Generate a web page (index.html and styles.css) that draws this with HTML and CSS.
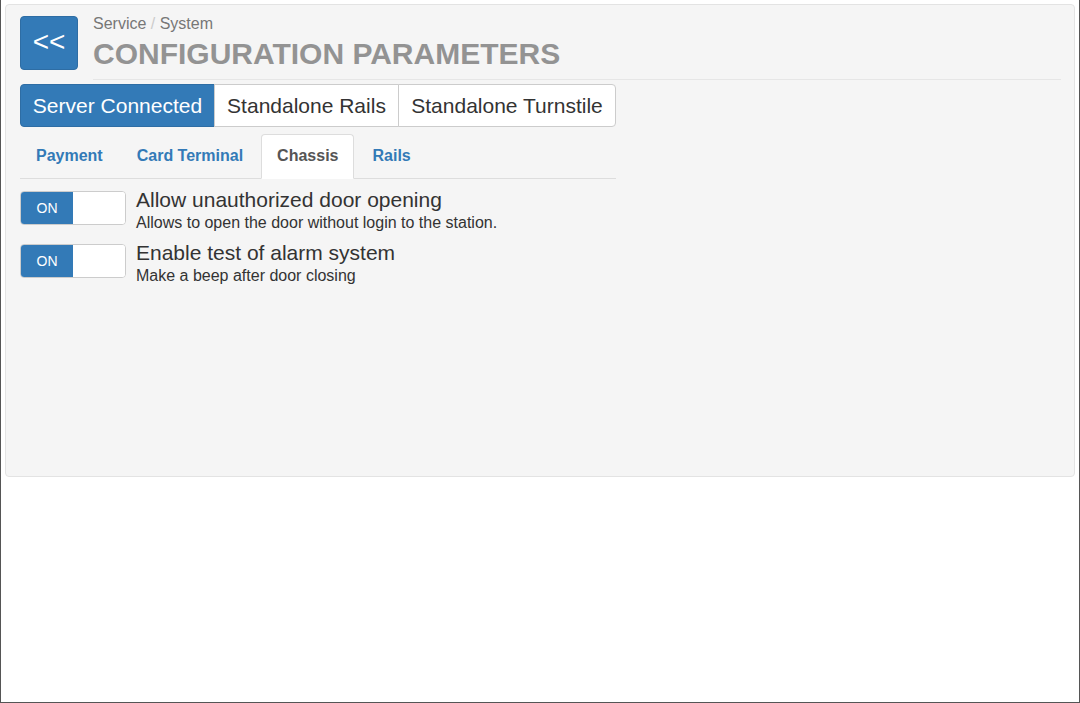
FILE: index.html
```html
<!DOCTYPE html>
<html>
<head>
<meta charset="utf-8">
<link rel="stylesheet" href="styles.css">
</head>
<body>
<div class="frame">
  <div class="well">
    <div class="header">
      <button class="back">&lt;&lt;</button>
      <div class="heading">
        <div class="crumbs">Service <span class="sep">/</span> System</div>
        <h1 class="title">CONFIGURATION PARAMETERS</h1>
      </div>
    </div>
    <div class="content">
      <div class="btn-group">
        <div class="btn active">Server Connected</div>
        <div class="btn">Standalone Rails</div>
        <div class="btn">Standalone Turnstile</div>
      </div>
      <ul class="tabs">
        <li class="tab">Payment</li>
        <li class="tab">Card Terminal</li>
        <li class="tab active">Chassis</li>
        <li class="tab">Rails</li>
      </ul>
      <div class="options">
        <div class="option">
          <div class="switch"><span class="on">ON</span><span class="off"></span></div>
          <div class="text">
            <div class="label">Allow unauthorized door opening</div>
            <div class="desc">Allows to open the door without login to the station.</div>
          </div>
        </div>
        <div class="option">
          <div class="switch"><span class="on">ON</span><span class="off"></span></div>
          <div class="text">
            <div class="label">Enable test of alarm system</div>
            <div class="desc">Make a beep after door closing</div>
          </div>
        </div>
      </div>
    </div>
  </div>
</div>
</body>
</html>
```
FILE: styles.css
```css
html, body {
  margin: 0;
  padding: 0;
  background: #fff;
}
body {
  font-family: "Liberation Sans", Arial, sans-serif;
  color: #333;
}
.frame {
  box-sizing: border-box;
  width: 1080px;
  height: 703px;
  border-left: 1px solid #555;
  border-right: 1px solid #555;
  border-bottom: 1px solid #555;
  padding: 4px 4px 0 4px;
}
.well {
  box-sizing: border-box;
  height: 473px;
  background: #f5f5f5;
  border: 1px solid #e3e3e3;
  border-radius: 4px;
  padding: 11px 13px 0 14px;
}
.header {
  display: flex;
  align-items: flex-start;
}
.back {
  width: 58px;
  height: 54px;
  background: #337ab7;
  border: 1px solid #2e6da4;
  border-radius: 4px;
  color: #fff;
  font-family: "Liberation Sans", Arial, sans-serif;
  font-size: 28px;
  line-height: 1;
  padding: 0 0 3px 0;
  margin: 0 15px 0 0;
}
.heading {
  flex: 1;
  border-bottom: 1px solid #e6e6e6;
  height: 63px;
}
.crumbs {
  font-size: 16px;
  line-height: 20px;
  color: #777;
  margin-top: -2px;
}
.sep {
  color: #ccc;
}
.title {
  margin: 3px 0 0 0;
  font-size: 30px;
  line-height: 34px;
  font-weight: bold;
  color: #939393;
}
.content {
  width: 596px;
}
.btn-group {
  display: flex;
  margin-top: 4px;
}
.btn {
  box-sizing: border-box;
  height: 43px;
  padding: 0 8px;
  font-size: 21px;
  line-height: 41px;
  background: #fff;
  border: 1px solid #ccc;
  color: #333;
  margin-left: -1px;
  white-space: nowrap;
}
.btn:first-child {
  margin-left: 0;
  border-radius: 4px 0 0 4px;
}
.btn:last-child {
  border-radius: 0 4px 4px 0;
  flex: 1;
  text-align: center;
}
.btn.active {
  background: #337ab7;
  border-color: #2e6da4;
  color: #fff;
  width: 195px;
  text-align: center;
}
.btn:nth-child(2) {
  width: 185px;
  text-align: center;
}
.tabs {
  list-style: none;
  margin: 7px 0 0 0;
  padding: 0;
  display: flex;
  border-bottom: 1px solid #ddd;
}
.tab {
  box-sizing: border-box;
  height: 44px;
  padding: 0 15px;
  margin: 0 2px -1px 0;
  font-size: 16px;
  font-weight: bold;
  line-height: 42px;
  color: #337ab7;
  border: 1px solid transparent;
  border-radius: 4px 4px 0 0;
}
.tab.active {
  background: #fff;
  color: #555;
  border-color: #ddd;
  border-bottom-color: #fff;
  height: 45px;
}
.options {
  margin-top: 12px;
  display: flex;
  flex-direction: column;
  gap: 12px;
}
.option {
  display: flex;
  align-items: flex-start;
}
.switch {
  box-sizing: border-box;
  width: 106px;
  height: 34px;
  border: 1px solid #ccc;
  border-radius: 4px;
  display: flex;
  overflow: hidden;
  background: #fff;
  margin-right: 10px;
}
.switch .on {
  width: 52px;
  background: #337ab7;
  color: #fff;
  font-size: 14px;
  line-height: 32px;
  text-align: center;
}
.switch .off {
  flex: 1;
  background: #fff;
}
.text {
  margin-top: -4px;
}
.label {
  font-size: 21px;
  line-height: 25px;
  color: #333;
}
.desc {
  font-size: 16px;
  line-height: 19px;
  margin-top: 1px;
  color: #333;
}
```
